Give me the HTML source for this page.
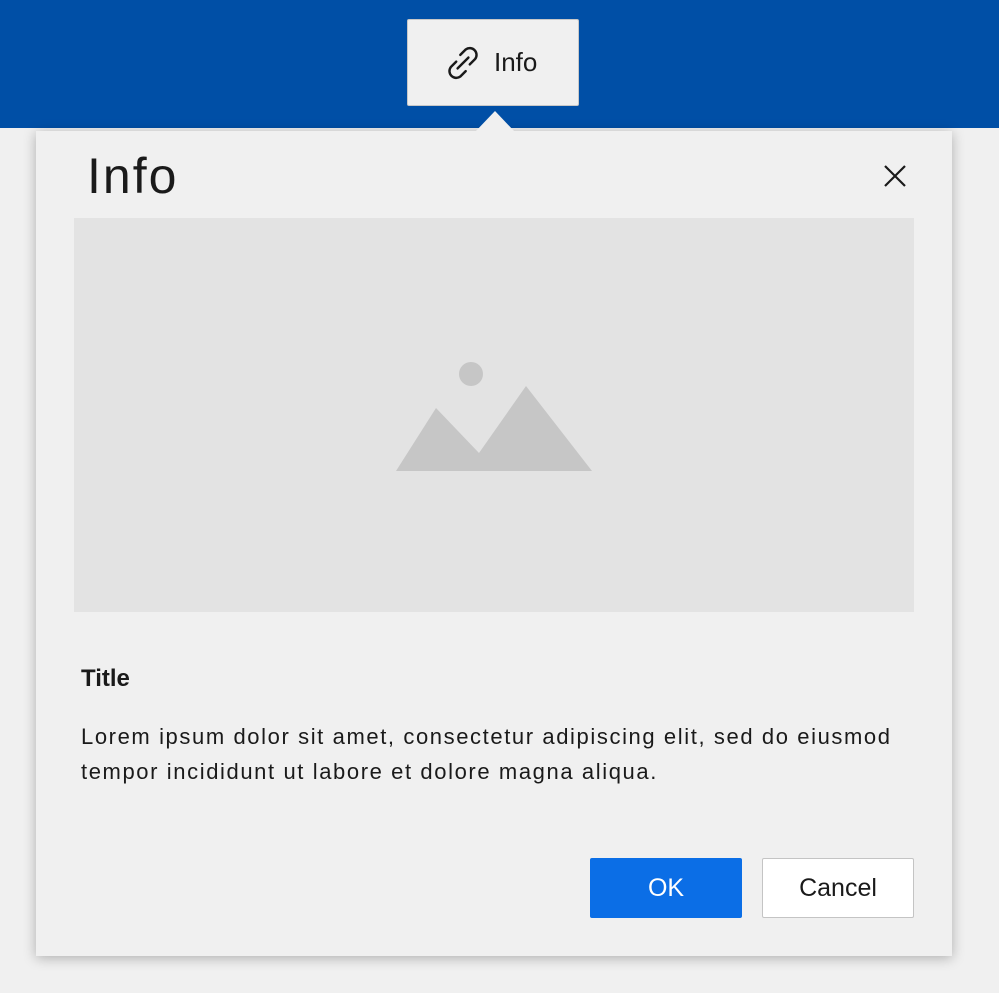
<!DOCTYPE html>
<html><head><style>
body{margin:0;width:999px;height:993px;background:#f0f0f0;position:relative;overflow:hidden;font-family:"Liberation Sans",sans-serif;color:#1a1a1a}
.hdr{position:absolute;left:0;top:0;width:999px;height:128px;background:#004fa6}
.btn{position:absolute;left:407px;top:19px;width:172px;height:87px;background:#f0f0f0;border:1px solid #c8c8c8;border-radius:2px;box-sizing:border-box}
.btn span{position:absolute;left:86px;top:27px;font-size:26px}
.dlg{position:absolute;left:36px;top:131px;width:916px;height:825px;background:#f0f0f0;box-shadow:0 2px 12px rgba(0,0,0,.28)}
.arrow{position:absolute;left:475px;top:111px;width:0;height:0;border-left:20px solid transparent;border-right:20px solid transparent;border-bottom:21px solid #f0f0f0}
</style></head><body>
<div class="hdr"></div>
<div class="btn">
<svg style="position:absolute;left:32px;top:20px" width="46" height="46" viewBox="0 0 34 34" fill="none" stroke="#1a1a1a" stroke-width="1.8" stroke-linecap="round"><path d="M15 11l4-4a5 5 0 0 1 7 7l-4 4"/><path d="M19 23l-4 4a5 5 0 0 1-7-7l4-4"/><path d="M13 21l8-8"/></svg>
<span>Info</span></div>
<div class="dlg">
<div style="position:absolute;left:51px;top:16px;font-size:50px;letter-spacing:2px">Info</div>
<svg style="position:absolute;left:847px;top:33px" width="24" height="24" viewBox="0 0 24 24" stroke="#1a1a1a" stroke-width="2.2"><path d="M2 2L22 22M22 2L2 22"/></svg>
<div style="position:absolute;left:38px;top:87px;width:840px;height:394px;background:#e3e3e3">
<svg style="position:absolute;left:320px;top:140px" width="200" height="115" viewBox="0 0 200 115"><circle cx="77" cy="16" r="12" fill="#c6c6c6"/><path d="M2 113L42 50L85 95L132 28L198 113Z" fill="#c6c6c6"/></svg>
</div>
<div style="position:absolute;left:45px;top:534px;font-size:24px;font-weight:bold">Title</div>
<div style="position:absolute;left:45px;top:588px;font-size:22px;line-height:35px;width:870px;letter-spacing:1.6px;white-space:nowrap">Lorem ipsum dolor sit amet, consectetur adipiscing elit, sed do eiusmod<br>tempor incididunt ut labore et dolore magna aliqua.</div>
<div style="position:absolute;left:554px;top:727px;width:152px;height:60px;background:#0b6ee6;border-radius:2px;color:#fff;font-size:25px;text-align:center;line-height:60px">OK</div>
<div style="position:absolute;left:726px;top:727px;width:152px;height:60px;background:#fff;border:1px solid #c4c4c4;box-sizing:border-box;border-radius:2px;font-size:25px;text-align:center;line-height:58px">Cancel</div>
</div>
<div class="arrow"></div>
</body></html>
